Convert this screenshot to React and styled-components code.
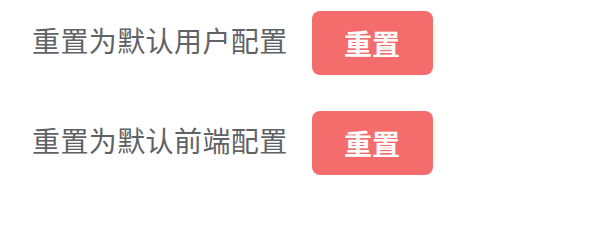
import React from "react";
import styled, { createGlobalStyle } from "styled-components";

const GlobalStyle = createGlobalStyle`
  body {
    margin: 0;
    background: #ffffff;
    font-family: "Noto Sans CJK SC", "Noto Sans", sans-serif;
  }
`;

const Panel = styled.div`
  display: flex;
  flex-direction: column;
  gap: 36px;
  padding: 11px 0 0 32px;
`;

const Row = styled.div`
  display: flex;
  align-items: center;
  gap: 24px;
`;

const Label = styled.span`
  font-size: 28px;
  letter-spacing: 0.4px;
  color: #606266;
  line-height: 1;
  padding-bottom: 7px;
`;

const ResetButton = styled.button`
  width: 121px;
  height: 64px;
  border: none;
  border-radius: 8px;
  background: #f56c6c;
  color: #ffffff;
  font-family: inherit;
  font-size: 28px;
  font-weight: 700;
  cursor: pointer;
  padding: 0;
`;

const items = ["重置为默认用户配置", "重置为默认前端配置"];

export default function App() {
  return (
    <>
      <GlobalStyle />
      <Panel>
        {items.map((text) => (
          <Row key={text}>
            <Label>{text}</Label>
            <ResetButton>重置</ResetButton>
          </Row>
        ))}
      </Panel>
    </>
  );
}
